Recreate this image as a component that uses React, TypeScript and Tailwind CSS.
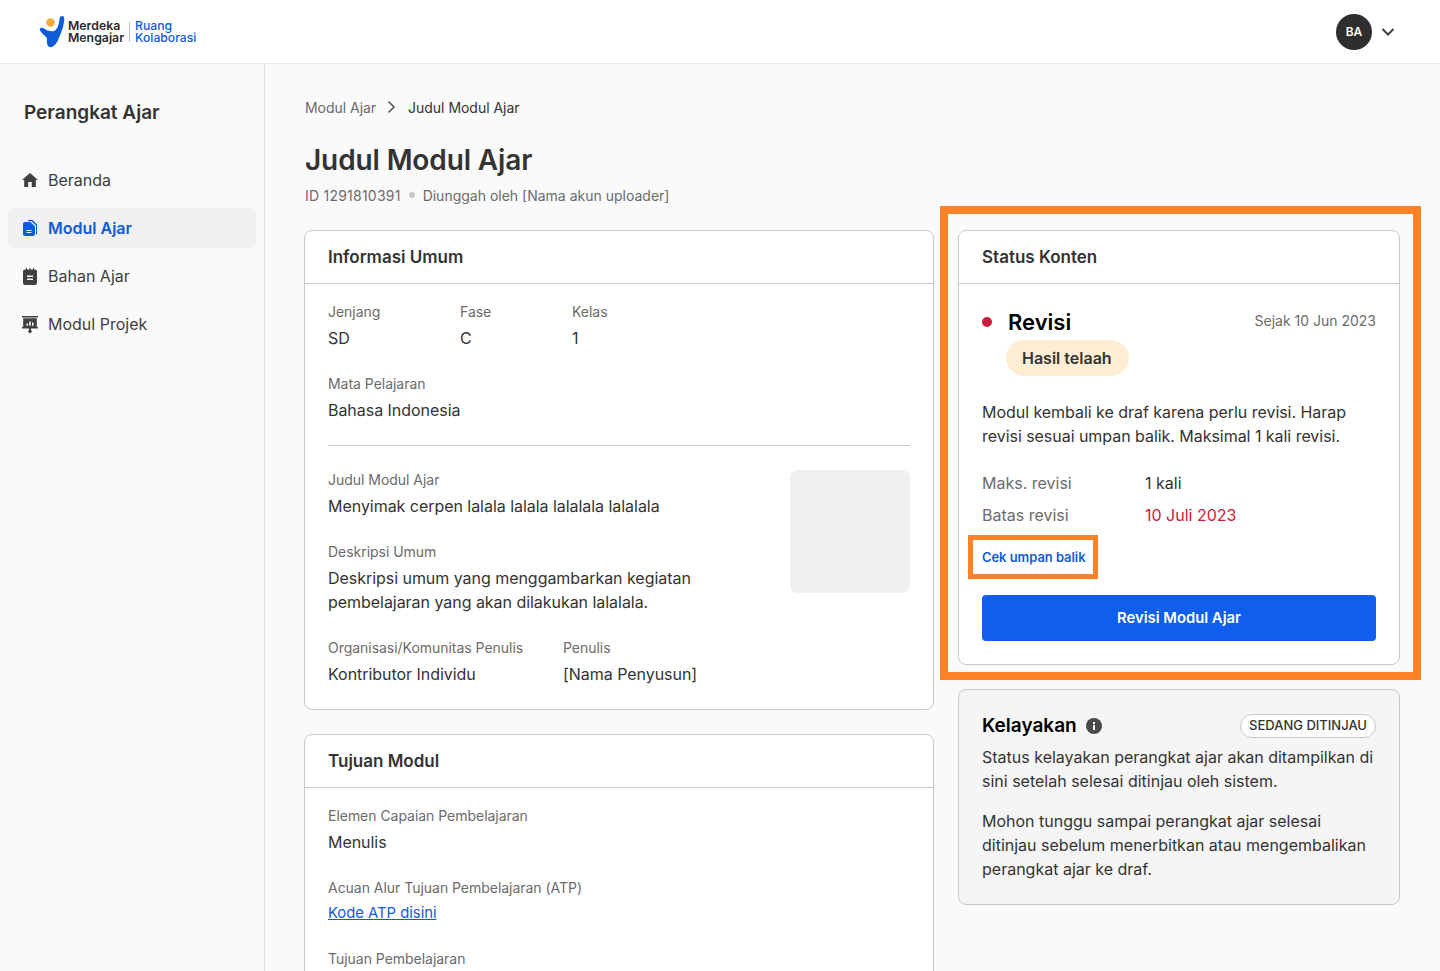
import React from "react";

const Field = ({ label, children, className = "" }: { label: string; children: React.ReactNode; className?: string }) => (
  <div className={className}>
    <div className="text-[14px] leading-[24px] tracking-[-0.03px] text-[#6b6b6b]">{label}</div>
    <div className="mt-[2px] text-[16px] leading-[24px] tracking-[-0.04px] text-[#333333]">{children}</div>
  </div>
);

const CardHeader = ({ title }: { title: string }) => (
  <div className="flex h-[53px] items-center border-b border-[#c9c9c9] px-[23px] pt-[2px] text-[17px] font-semibold text-[#333333]">{title}</div>
);

const NavItem = ({ icon, label, active }: { icon: React.ReactNode; label: string; active?: boolean }) => (
  <div className={`flex h-[40px] items-center gap-[10px] rounded-[6px] pl-[14px] text-[16px] ${active ? "bg-[#f0f0f0] font-semibold text-[#0f5bd9]" : "text-[#404040]"}`}>
    <span className="flex h-[16px] w-[16px] items-center justify-center">{icon}</span>
    {label}
  </div>
);

export default function App() {
  return (
    <div className="flex h-[971px] flex-col overflow-hidden bg-[#fafafa] font-['Inter',sans-serif]">
      <header className="flex h-[64px] shrink-0 items-center justify-between border-b border-[#ebebeb] bg-white pl-[39px] pr-[45px]">
        <div className="flex items-center">
          <svg width="26" height="34" viewBox="0 0 26 34">
            <circle cx="11.5" cy="7.5" r="4.2" fill="#f5a93b" />
            <path d="M23 1 C25.5 1 25.5 4 25 7 C24 14 21.5 19 19.5 24 C17.5 29 14 33 10.5 32 C8 31 7.5 27 8 23 C6 21 2.5 18 1 15.5 C0 13.5 2 12 4 13 C8 15.5 12 17 15 16 C19 14.5 20 8 20.5 4 C20.8 2 21.5 1 23 1 Z" fill="#0f5bd9" />
          </svg>
          <div className="ml-[3px] text-[12.3px] font-semibold leading-[12px] text-[#2b2b2b]">
            <div>Merdeka</div>
            <div>Mengajar</div>
          </div>
          <div className="ml-[5px] mr-[5px] h-[20px] w-px bg-[#bdbdbd]" />
          <div className="text-[12.2px] font-medium leading-[12px] text-[#0f5bd9]">
            <div>Ruang</div>
            <div>Kolaborasi</div>
          </div>
        </div>
        <div className="flex items-center gap-[9px]">
          <div className="flex h-[36px] w-[36px] items-center justify-center rounded-full bg-[#2e2e2e] text-[12px] font-semibold text-white">BA</div>
          <svg width="14" height="8" viewBox="0 0 14 8" fill="none" stroke="#404040" strokeWidth="2"><path d="M1.5 1 L7 6.5 L12.5 1" /></svg>
        </div>
      </header>

      <div className="flex min-h-0 flex-1">
        <aside className="w-[265px] shrink-0 border-r border-[#e0e0e0] px-[8px] pt-[36px]">
          <div className="pl-[16px] text-[19px] font-semibold leading-[26px] text-[#333333]">Perangkat Ajar</div>
          <nav className="mt-[34px] flex flex-col gap-[8px]">
            <NavItem label="Beranda" icon={<svg width="16" height="14" viewBox="0 0 16 14" fill="#404040"><path d="M8 0 L16 7 H13.8 V14 H9.8 V9 H6.2 V14 H2.2 V7 H0 Z" /></svg>} />
            <NavItem active label="Modul Ajar" icon={<svg width="15" height="16" viewBox="0 0 15 16" fill="#0f5bd9"><path d="M5 0 H9.5 L14 4.5 V13 C14 14 13.6 14.6 13 15 V5.5 L8.5 1.2 H5 Z" /><path fillRule="evenodd" d="M2 2 H7.5 L12 6.5 V14 C12 15.1 11.1 16 10 16 H2 C0.9 16 0 15.1 0 14 V4 C0 2.9 0.9 2 2 2 Z M3.5 10 V11 H8.5 V10 Z M3.5 12 V13 H8.5 V12 Z" /></svg>} />
            <NavItem label="Bahan Ajar" icon={<svg width="14" height="17" viewBox="0 0 14 17" fill="#404040"><path fillRule="evenodd" d="M2 1.5 H3 V0 H4 V1.5 H6.5 V0 H7.5 V1.5 H10 V0 H11 V1.5 H12 C13.1 1.5 14 2.4 14 3.5 V15 C14 16.1 13.1 17 12 17 H2 C0.9 17 0 16.1 0 15 V3.5 C0 2.4 0.9 1.5 2 1.5 Z M4 7.5 V9 H10 V7.5 Z M4 10.5 V12 H10 V10.5 Z" /></svg>} />
            <NavItem label="Modul Projek" icon={<svg width="16" height="17" viewBox="0 0 16 17" fill="#404040"><path fillRule="evenodd" d="M0 0 H16 V1.5 H0 Z M1.2 2.3 H14.8 V11 H16 V12.5 H9 V14 A1.7 1.7 0 1 1 7 14 V12.5 H0 V11 H1.2 Z M4.5 7.5 V9.8 H6 V7.5 Z M7.2 5.5 V9.8 H8.8 V5.5 Z M10 6.5 V9.8 H11.5 V6.5 Z" /></svg>} />
          </nav>
        </aside>

        <main className="min-w-0 flex-1 pl-[39px] pr-[40px] pt-[31px]">
          <div className="flex h-[24px] items-center text-[14px] tracking-[-0.03px]">
            <span className="ml-px text-[#6b6b6b]">Modul Ajar</span>
            <svg className="ml-[11px] mr-[12px]" width="9" height="14" viewBox="0 0 9 14" fill="none" stroke="#595959" strokeWidth="1.6"><path d="M1.5 1.5 L7 7 L1.5 12.5" /></svg>
            <span className="text-[#333333]">Judul Modul Ajar</span>
          </div>
          <h1 className="ml-px mt-[21px] text-[28px] font-semibold leading-[40px] tracking-[-0.12px] text-[#333333]">Judul Modul Ajar</h1>
          <div className="ml-px mt-[3px] flex h-[24px] items-center text-[14px] text-[#6b6b6b]">
            <span className="tracking-[0.23px]">ID 1291810391</span>
            <span className="mx-[8px] h-[6px] w-[6px] rounded-full bg-[#c9c9c9]" />
            <span>Diunggah oleh [Nama akun uploader]</span>
          </div>

          <div className="mt-[23px] flex items-start gap-[24px]">
            <div className="flex w-[630px] shrink-0 flex-col gap-[24px]">
              <section className="h-[480px] rounded-[8px] border border-[#c9c9c9] bg-white">
                <CardHeader title="Informasi Umum" />
                <div className="px-[23px] pt-[16px]">
                  <div className="flex">
                    <Field label="Jenjang" className="w-[132px]">SD</Field>
                    <Field label="Fase" className="w-[112px]">C</Field>
                    <Field label="Kelas">1</Field>
                  </div>
                  <Field label="Mata Pelajaran" className="mt-[22px]">Bahasa Indonesia</Field>
                  <div className="mt-[23px] h-px bg-[#c9c9c9]" />
                  <div className="mt-[24px] flex items-start justify-between">
                    <div className="-mt-[2px] w-[400px]">
                      <Field label="Judul Modul Ajar">Menyimak cerpen lalala lalala lalalala lalalala</Field>
                      <Field label="Deskripsi Umum" className="mt-[22px]">Deskripsi umum yang menggambarkan kegiatan pembelajaran yang akan dilakukan lalalala.</Field>
                    </div>
                    <div className="h-[123px] w-[120px] rounded-[8px] bg-[#f0f0f0]" />
                  </div>
                  <div className="mt-[22px] flex">
                    <Field label="Organisasi/Komunitas Penulis" className="w-[235px]">Kontributor Individu</Field>
                    <Field label="Penulis">[Nama Penyusun]</Field>
                  </div>
                </div>
              </section>

              <section className="h-[400px] rounded-[8px] border border-[#c9c9c9] bg-white">
                <CardHeader title="Tujuan Modul" />
                <div className="px-[23px] pt-[16px]">
                  <Field label="Elemen Capaian Pembelajaran">Menulis</Field>
                  <div className="mt-[22px]">
                    <div className="text-[14px] leading-[24px] tracking-[-0.03px] text-[#6b6b6b]">Acuan Alur Tujuan Pembelajaran (ATP)</div>
                    <div className="pt-px text-[14.8px] leading-[24px] text-[#0f5bd9] underline">Kode ATP disini</div>
                  </div>
                  <div className="mt-[22px] text-[14px] leading-[24px] tracking-[-0.03px] text-[#6b6b6b]">Tujuan Pembelajaran</div>
                </div>
              </section>
            </div>

            <div className="flex w-[442px] shrink-0 flex-col gap-[24px]">
              <section className="relative h-[435px] rounded-[8px] border border-[#c9c9c9] bg-white">
                <div className="pointer-events-none absolute -left-[19px] -right-[22px] -top-[25px] -bottom-[16px] border-[8px] border-[#ff8229]" />
                <CardHeader title="Status Konten" />
                <div className="px-[23px] pt-[22px]">
                  <div className="flex items-start justify-between">
                    <div className="flex items-center">
                      <span className="h-[10px] w-[10px] rounded-full bg-[#c8203a]" />
                      <span className="ml-[16px] text-[22px] font-semibold leading-[32px] text-black">Revisi</span>
                    </div>
                    <span className="text-[14px] leading-[30px] text-[#6b6b6b]">Sejak 10 Jun 2023</span>
                  </div>
                  <div className="ml-[24px] mt-[2px] inline-flex h-[36px] items-center rounded-full bg-[#fdeed3] pl-[16px] pr-[17px] text-[16px] font-semibold text-[#333333]">Hasil telaah</div>
                  <p className="mt-[24px] text-[16px] leading-[24px] tracking-[-0.04px] text-[#333333]">Modul kembali ke draf karena perlu revisi. Harap revisi sesuai umpan balik. Maksimal 1 kali revisi.</p>
                  <div className="mt-[23px] flex h-[24px] items-center text-[16px]">
                    <span className="w-[163px] text-[#6b6b6b]">Maks. revisi</span>
                    <span className="text-[#333333]">1 kali</span>
                  </div>
                  <div className="mt-[8px] flex h-[24px] items-center text-[16px]">
                    <span className="w-[163px] text-[#6b6b6b]">Batas revisi</span>
                    <span className="text-[#c8203a]">10 Juli 2023</span>
                  </div>
                  <div className="relative mt-[18px] h-[24px] text-[12.9px] font-semibold leading-[26px] text-[#0f5bd9]">
                    Cek umpan balik
                    <div className="pointer-events-none absolute -left-[14px] -top-[10px] h-[44px] w-[130px] border-[5px] border-[#ff8229]" />
                  </div>
                  <button className="mt-[26px] h-[46px] w-full rounded-[4px] bg-[#0f5fec] text-[14.8px] font-semibold text-white">Revisi Modul Ajar</button>
                </div>
              </section>

              <section className="h-[216px] rounded-[8px] border border-[#c9c9c9] bg-[#f5f5f5] px-[23px] pt-[24px]">
                <div className="flex items-center justify-between">
                  <div className="flex items-center gap-[9px]">
                    <span className="text-[19px] font-semibold leading-[24px] text-black">Kelayakan</span>
                    <svg width="16" height="16" viewBox="0 0 16 16"><circle cx="8" cy="8" r="8" fill="#4a4a4a" /><rect x="7" y="7" width="2" height="5" fill="white" /><rect x="7" y="4" width="2" height="2" fill="white" /></svg>
                  </div>
                  <span className="flex h-[24px] items-center rounded-full border border-[#c9c9c9] bg-white px-[8px] text-[13px] font-medium text-[#333333]">SEDANG DITINJAU</span>
                </div>
                <p className="mt-[7px] text-[16px] leading-[24px] text-[#333333]">Status kelayakan perangkat ajar akan ditampilkan di sini setelah selesai ditinjau oleh sistem.</p>
                <p className="mt-[16px] text-[16px] leading-[24px] text-[#333333]">Mohon tunggu sampai perangkat ajar selesai ditinjau sebelum menerbitkan atau mengembalikan perangkat ajar ke draf.</p>
              </section>
            </div>
          </div>
        </main>
      </div>
    </div>
  );
}
